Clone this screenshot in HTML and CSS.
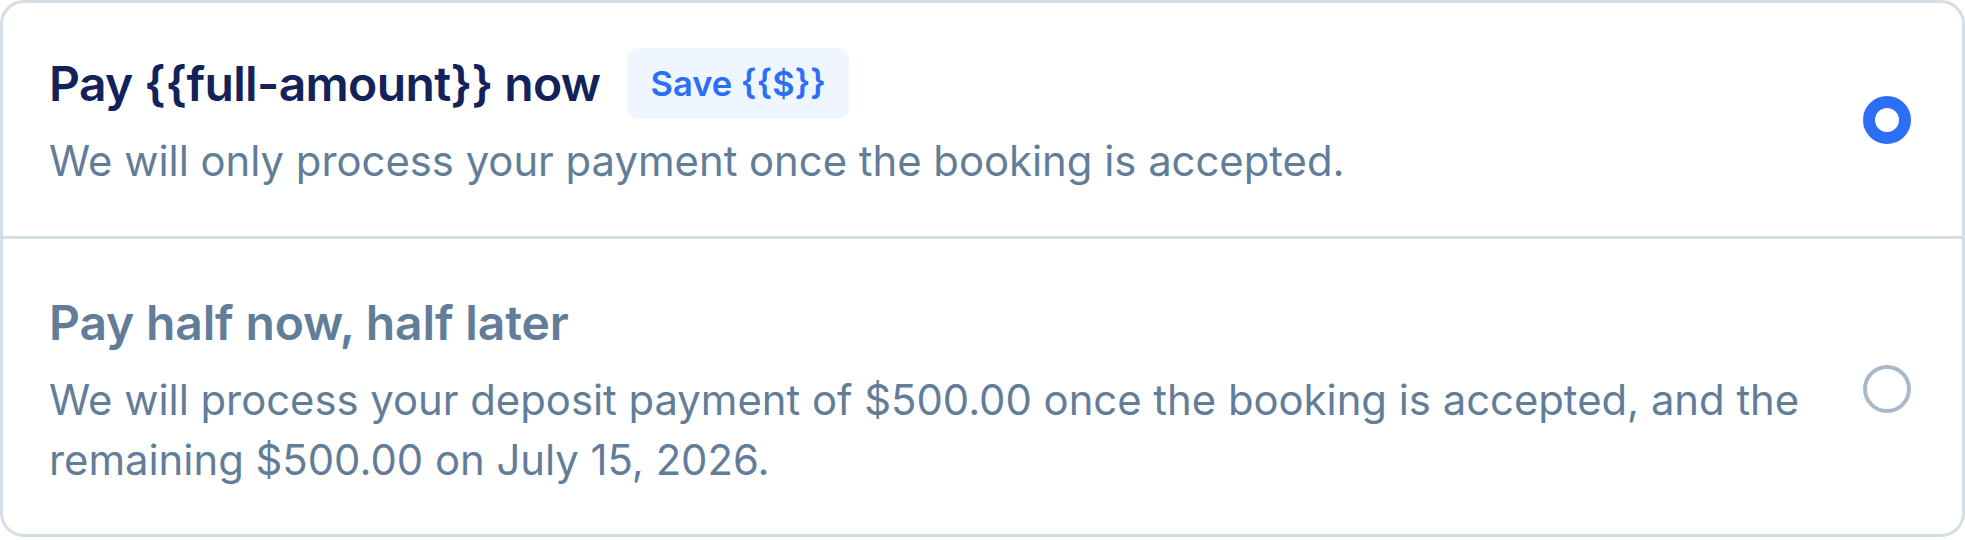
FILE: index.html
```html
<!DOCTYPE html>
<html lang="en">
<head>
<meta charset="utf-8">
<title>Payment options</title>
<link rel="stylesheet" href="styles.css">
</head>
<body>
<div class="card">
  <label class="option option-first is-selected">
    <div class="option-body">
      <div class="option-head">
        <span class="option-title">Pay {{full-amount}} now</span>
        <span class="badge">Save {{$}}</span>
      </div>
      <p class="option-desc">We will only process your payment once the booking is accepted.</p>
    </div>
    <span class="radio radio-checked"></span>
  </label>
  <label class="option option-second">
    <div class="option-body">
      <div class="option-head">
        <span class="option-title option-title-muted">Pay half now, half later</span>
      </div>
      <p class="option-desc">We will process your deposit payment of $500.00 once the booking is accepted, and the remaining $500.00 on July 15, 2026.</p>
    </div>
    <span class="radio"></span>
  </label>
</div>
</body>
</html>
```
FILE: styles.css
```css
html, body {
  margin: 0;
  padding: 0;
  background: #ffffff;
}

body {
  font-family: Inter, "Noto Sans", "Liberation Sans", sans-serif;
  width: 1965px;
}

.card {
  border: 3px solid #d4dee7;
  border-radius: 24px;
  box-sizing: border-box;
  height: 537px;
  display: flex;
  flex-direction: column;
  overflow: hidden;
}

.option {
  display: flex;
  align-items: center;
  gap: 24px;
  padding: 45px 51px 45px 46px;
}

.option-second {
  border-top: 3px solid #d4dee7;
  padding-top: 48px;
}

.option-body {
  flex: 1;
  min-width: 0;
}

.option-head {
  display: flex;
  align-items: center;
  gap: 27px;
  height: 71px;
}

.option-title {
  font-size: 48px;
  line-height: 58px;
  font-weight: 600;
  letter-spacing: -0.65px;
  color: #13235a;
}

.option-title-muted {
  color: #627d98;
  letter-spacing: -0.15px;
}

.badge {
  display: flex;
  align-items: center;
  height: 71px;
  padding: 0 23px;
  border-radius: 12px;
  background: #eff6ff;
  color: #2b6ff6;
  font-size: 34.5px;
  font-weight: 600;
}

.option-desc {
  margin: 12px 0 0;
  font-size: 41.8px;
  line-height: 60px;
  color: #627d98;
}

.radio {
  flex: none;
  width: 48px;
  height: 48px;
  box-sizing: border-box;
  border-radius: 50%;
  border: 4px solid #a9b9c9;
  background: #ffffff;
}

.radio-checked {
  border: 12px solid #2b6ff6;
}
```
